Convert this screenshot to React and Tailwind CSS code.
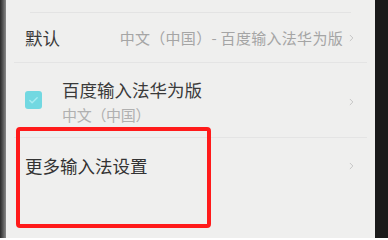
import { ChevronRight, Check } from "lucide-react";

const font = { fontFamily: '"Noto Sans CJK SC", "Noto Sans", sans-serif' };

const Arrow = () => (
  <ChevronRight className="w-[11px] h-[14px] text-[#bcbcbc] shrink-0" strokeWidth={1.8} />
);

export default function App() {
  return (
    <div className="w-[388px] h-[238px] flex overflow-hidden bg-[#1c1c1c]" style={font}>
      <div className="w-[6px] bg-gradient-to-r from-[#2a2a2a] to-[#8a8a8a]" />
      <div className="relative flex-1 flex flex-col bg-[#efefee]">
        <div className="h-[12px]" />
        <div className="h-px mx-[24px] bg-[#e3e3e3]" />

        <div className="h-[49px] flex items-center pl-[19px] pr-[18px]">
          <span className="text-[17.5px] text-[#3a3a3a] leading-none">默认</span>
          <span className="ml-auto text-[15px] text-[#a5a5a5] leading-none tracking-[0.3px]">中文（中国）- 百度输入法华为版</span>
          <div className="ml-[3px]"><Arrow /></div>
        </div>
        <div className="h-px mx-[8px] bg-[#e4e4e4]" />

        <div className="h-[74px] flex items-center pl-[19px] pr-[18px]">
          <div className="w-[17px] h-[18px] rounded-[3px] bg-[#72d8e1] flex items-center justify-center">
            <Check className="w-[11px] h-[11px] text-[#a8ecf1]" strokeWidth={3} />
          </div>
          <div className="flex flex-col ml-[20px] pt-[3px]">
            <span className="text-[17.5px] text-[#3a3a3a] leading-none">百度输入法华为版</span>
            <span className="text-[15px] text-[#b0b0b0] leading-none mt-[8px] tracking-[-0.3px]">中文（中国）</span>
          </div>
          <div className="ml-auto pt-[4px]"><Arrow /></div>
        </div>
        <div className="h-px mx-[8px] bg-[#e4e4e4]" />

        <div className="h-[56px] flex items-center pl-[19px] pr-[18px]">
          <span className="text-[17.5px] text-[#333] leading-none">更多输入法设置</span>
          <div className="ml-auto"><Arrow /></div>
        </div>

        <div className="absolute left-[10px] top-[127px] w-[195px] h-[101px] border-[4px] border-[#ff1a1a] rounded-[4px]" />
      </div>
      <div className="w-[13px] bg-[#1a1a1a]" />
    </div>
  );
}
